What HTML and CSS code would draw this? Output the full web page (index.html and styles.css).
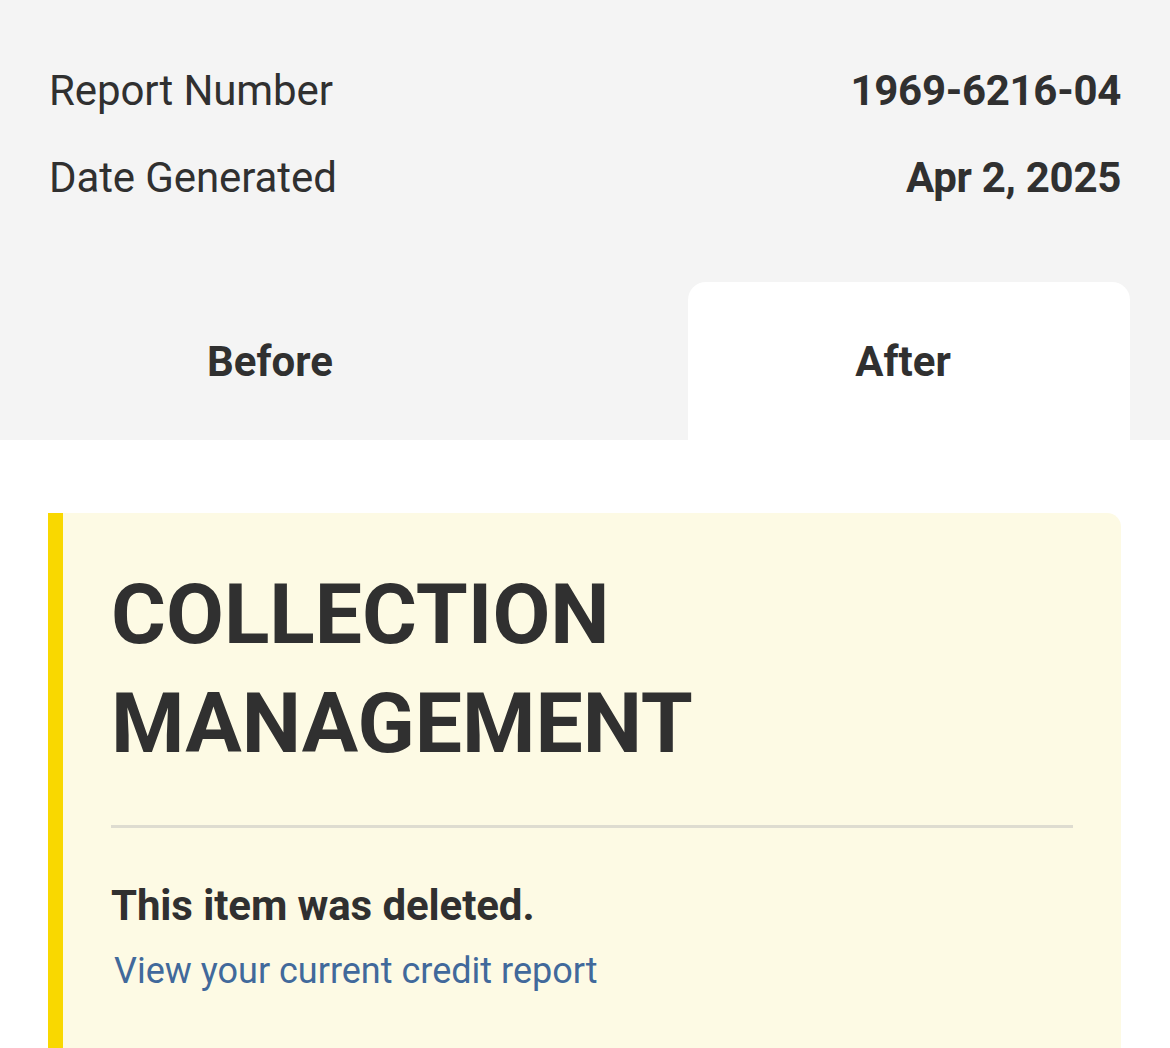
FILE: index.html
```html
<!DOCTYPE html>
<html>
<head>
<meta charset="utf-8">
<link rel="stylesheet" href="styles.css">
</head>
<body>
<div class="top">
  <div class="meta">
    <div class="row"><span class="label">Report Number</span><span class="value">1969-6216-04</span></div>
    <div class="row"><span class="label">Date Generated</span><span class="value">Apr 2, 2025</span></div>
  </div>
  <div class="tabs">
    <div class="tab">Before</div>
    <div class="tab active">After</div>
  </div>
</div>
<div class="content">
  <div class="card">
    <h1 class="title">COLLECTION MANAGEMENT</h1>
    <hr class="divider">
    <p class="status">This item was deleted.</p>
    <a class="link" href="#">View your current credit report</a>
  </div>
</div>
</body>
</html>
```
FILE: styles.css
```css
html, body {
  margin: 0;
  padding: 0;
  background: #ffffff;
  font-family: Roboto, "Noto Sans", sans-serif;
  color: #303030;
}
.top {
  background: #f4f4f4;
  padding-top: 47px;
}
.meta {
  padding: 0 49px;
}
.row {
  display: flex;
  justify-content: space-between;
  height: 87px;
  line-height: 87px;
  font-size: 42px;
}
.label {
  font-weight: 400;
  letter-spacing: -0.1px;
}
.value {
  font-weight: 700;
  letter-spacing: -0.3px;
}
.tabs {
  display: flex;
  justify-content: space-between;
  padding: 0 40px 0 49px;
  margin-top: 61px;
}
.tab {
  width: 442px;
  height: 158px;
  display: flex;
  align-items: center;
  justify-content: center;
  font-size: 42px;
  font-weight: 700;
  border-radius: 18px 18px 0 0;
  box-sizing: border-box;
}
.tab.active {
  background: #ffffff;
  padding-right: 12px;
}
.content {
  padding: 73px 49px 0 48px;
}
.card {
  background: #fdfae4;
  border-left: 15px solid #f9d800;
  border-radius: 0 14px 14px 0;
  padding: 47px 48px 80px 48px;
}
.title {
  margin: 0;
  font-size: 84px;
  line-height: 109px;
  font-weight: 700;
  max-width: 700px;
}
.divider {
  border: none;
  height: 3px;
  background: #dedcd0;
  margin: 47px 0 50px 0;
}
.status {
  margin: 0;
  font-size: 42px;
  line-height: 56px;
  font-weight: 700;
  letter-spacing: -0.1px;
}
.link {
  display: block;
  margin-top: 9px;
  padding-left: 3px;
  font-size: 36px;
  line-height: 56px;
  color: #41699b;
  text-decoration: none;
}
```
